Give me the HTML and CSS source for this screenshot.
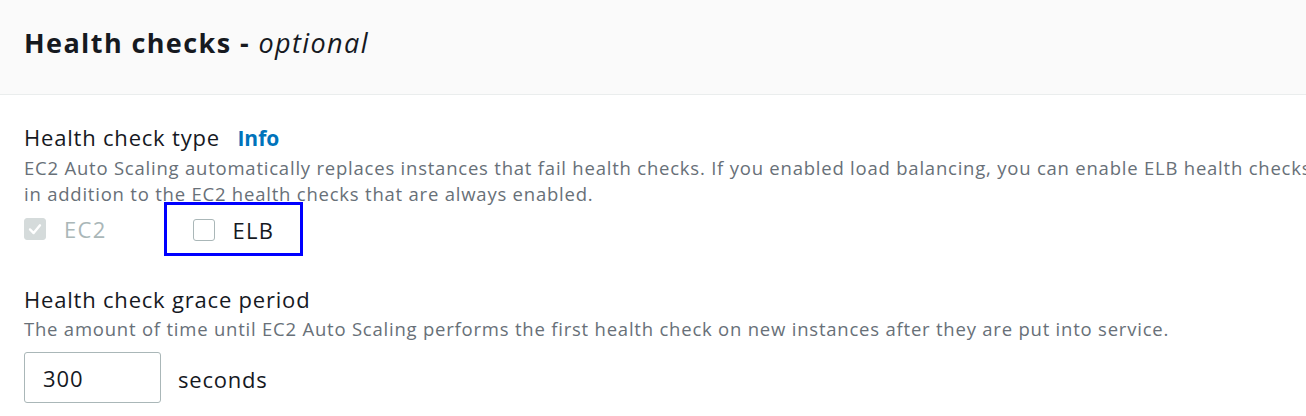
FILE: index.html
```html
<!DOCTYPE html>
<html lang="en">
<head>
<meta charset="utf-8">
<title>Health checks</title>
<link rel="stylesheet" href="styles.css">
</head>
<body>
<div class="panel">
  <div class="panel-header">
    <h2 class="panel-title">Health checks - <i class="optional">optional</i></h2>
  </div>
  <div class="panel-body">
    <div class="field">
      <div class="label">Health check type <a class="info" href="#">Info</a></div>
      <div class="desc">EC2 Auto Scaling automatically replaces instances that fail health checks. If you enabled load balancing, you can enable ELB health checks<br>in addition to the EC2 health checks that are always enabled.</div>
      <div class="checks">
        <label class="check disabled">
          <span class="box checked">
            <svg viewBox="0 0 22 22" width="22" height="22"><path d="M5.5 11.5 L9.5 15.5 L16.5 7" fill="none" stroke="#ffffff" stroke-width="2.6" stroke-linecap="round" stroke-linejoin="round"/></svg>
          </span>
          <span class="check-text">EC2</span>
        </label>
        <label class="check highlighted">
          <span class="box"></span>
          <span class="check-text">ELB</span>
        </label>
      </div>
    </div>
    <div class="field field-grace">
      <div class="label">Health check grace period</div>
      <div class="desc">The amount of time until EC2 Auto Scaling performs the first health check on new instances after they are put into service.</div>
      <div class="input-row">
        <div class="input">300</div>
        <span class="unit">seconds</span>
      </div>
    </div>
  </div>
</div>
</body>
</html>
```

FILE: styles.css
```css
html, body {
  margin: 0;
  padding: 0;
  background: #ffffff;
  overflow: hidden;
}
body {
  font-family: "Open Sans", "Noto Sans", "Liberation Sans", Arial, sans-serif;
  color: #16191f;
  width: 1306px;
  height: 416px;
}
.panel-header {
  background: #fafafa;
  border-bottom: 1px solid #eaeded;
  height: 95px;
  box-sizing: border-box;
  padding: 26px 24px 0 24px;
}
.panel-title {
  margin: 0;
  font-size: 27px;
  line-height: 33px;
  font-weight: 700;
  letter-spacing: 1.4px;
  color: #16191f;
}
.optional {
  font-weight: 400;
  font-style: italic;
}
.panel-body {
  padding: 26px 24px 0 24px;
}
.label {
  font-size: 22px;
  line-height: 33px;
  letter-spacing: 0.8px;
  color: #16191f;
  white-space: nowrap;
}
.info {
  font-size: 21px;
  color: #0073bb;
  font-weight: 700;
  letter-spacing: 0;
  text-decoration: none;
  margin-left: 11px;
}
.desc {
  font-size: 18.5px;
  line-height: 26px;
  letter-spacing: 0.78px;
  color: #687078;
  white-space: nowrap;
}
.checks {
  display: flex;
  align-items: center;
  margin-top: -5px;
  height: 54px;
}
.check {
  display: flex;
  align-items: center;
  font-size: 22px;
  line-height: 30px;
  letter-spacing: 1.3px;
}
.check.disabled {
  color: #aab7b8;
  margin-right: 57px;
}
.check.highlighted {
  border: 3px solid #0000ff;
  height: 54px;
  box-sizing: border-box;
  padding: 2px 26px 0 26px;
}
.box {
  width: 22px;
  height: 22px;
  box-sizing: border-box;
  border: 1px solid #aab7b8;
  border-radius: 3px;
  background: #ffffff;
  margin-right: 18px;
  display: flex;
  align-items: center;
  justify-content: center;
}
.box.checked {
  background: #d5dbdb;
  border-color: #d5dbdb;
}
.box svg {
  display: block;
}
.field-grace {
  margin-top: 27px;
}
.input-row {
  display: flex;
  align-items: center;
  margin-top: 10px;
}
.input {
  width: 137px;
  height: 51px;
  box-sizing: border-box;
  border: 1px solid #aab7b8;
  border-radius: 3px;
  padding: 3px 18px 0 18px;
  font-size: 22px;
  line-height: 45px;
  letter-spacing: 0.9px;
  color: #16191f;
}
.unit {
  font-size: 22px;
  letter-spacing: 0.8px;
  margin-left: 17px;
  padding-top: 3px;
  color: #16191f;
}
```
